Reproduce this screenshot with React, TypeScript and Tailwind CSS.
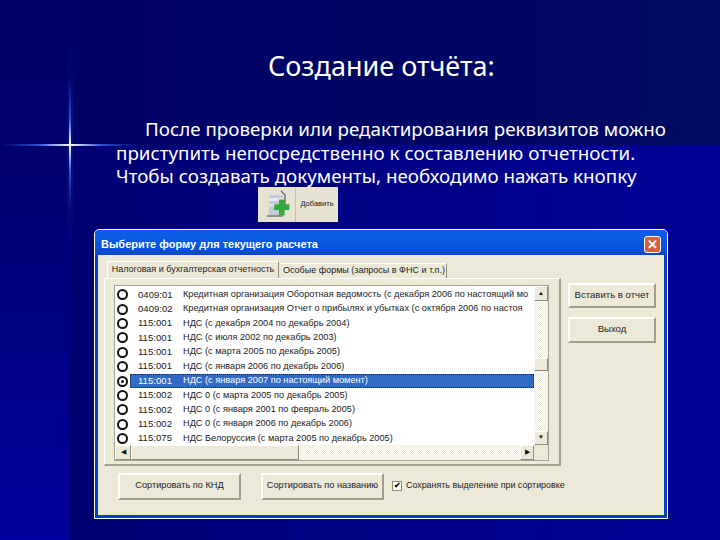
import { ReactNode } from "react";

const rows = [
  ["0409:01", "Кредитная организация Оборотная ведомость (с декабря 2006 по настоящий мо"],
  ["0409:02", "Кредитная организация Отчет о прибылях и убытках (с октября 2006 по настоя"],
  ["115:001", "НДС (с декабря 2004 по декабрь 2004)"],
  ["115:001", "НДС (с июля 2002 по декабрь 2003)"],
  ["115:001", "НДС (с марта 2005 по декабрь 2005)"],
  ["115:001", "НДС (с января 2006 по декабрь 2006)"],
  ["115:001", "НДС (с января 2007 по настоящий момент)"],
  ["115:002", "НДС 0 (с марта 2005 по декабрь 2005)"],
  ["115:002", "НДС 0 (с января 2001 по февраль 2005)"],
  ["115:002", "НДС 0 (с января 2006 по декабрь 2006)"],
  ["115:075", "НДС Белоруссия (с марта 2005 по декабрь 2005)"],
];

const Backdrop = () => (
  <svg className="absolute inset-0" width="720" height="540" viewBox="0 0 720 540">
    <defs>
      <linearGradient id="side" x1="0" y1="0" x2="0" y2="1">
        <stop offset="0" stopColor="#000068" />
        <stop offset="0.3" stopColor="#000070" />
        <stop offset="1" stopColor="#00009c" />
      </linearGradient>
      <linearGradient id="main" x1="0" y1="0" x2="1" y2="0">
        <stop offset="0" stopColor="#00006c" />
        <stop offset="0.45" stopColor="#000084" />
        <stop offset="1" stopColor="#000096" />
      </linearGradient>
      <linearGradient id="top" x1="0" y1="0" x2="1" y2="0">
        <stop offset="0" stopColor="#000068" />
        <stop offset="1" stopColor="#000a60" />
      </linearGradient>
      <linearGradient id="beamH" x1="0" y1="0" x2="1" y2="0">
        <stop offset="0" stopColor="#2040c0" stopOpacity="0" />
        <stop offset="0.28" stopColor="#2f55d0" />
        <stop offset="0.5" stopColor="#ffffff" />
        <stop offset="0.72" stopColor="#2f55d0" />
        <stop offset="1" stopColor="#2040c0" stopOpacity="0" />
      </linearGradient>
      <linearGradient id="beamV" x1="0" y1="0" x2="0" y2="1">
        <stop offset="0" stopColor="#2040c0" stopOpacity="0" />
        <stop offset="0.3" stopColor="#2f55d0" />
        <stop offset="0.5" stopColor="#ffffff" />
        <stop offset="0.7" stopColor="#2f55d0" />
        <stop offset="1" stopColor="#2040c0" stopOpacity="0" />
      </linearGradient>
      <linearGradient id="haze" x1="0" y1="0" x2="0" y2="1">
        <stop offset="0" stopColor="#1030b0" stopOpacity="0" />
        <stop offset="0.5" stopColor="#1030b0" stopOpacity="0.35" />
        <stop offset="1" stopColor="#1030b0" stopOpacity="0" />
      </linearGradient>
    </defs>
    <rect width="720" height="540" fill="url(#main)" />
    <rect width="720" height="145" fill="url(#top)" />
    <rect width="70" height="540" fill="url(#side)" />
    <rect x="67" y="35" width="6" height="225" fill="url(#haze)" />
    <rect x="0" y="144" width="140" height="2" fill="url(#beamH)" />
    <rect x="69" y="80" width="2" height="130" fill="url(#beamV)" />
  </svg>
);

const Radio = ({ on }: { on?: boolean }) => (
  <span className="w-[11px] h-[11px] rounded-full border-2 border-[#111] bg-white flex items-center justify-center shrink-0">
    {on && <span className="w-[3px] h-[3px] rounded-full bg-black" />}
  </span>
);

const Btn = ({ className, children }: { className: string; children: ReactNode }) => (
  <div
    className={`flex items-center justify-center whitespace-nowrap border-2 border-t-white border-l-white border-r-[#a09e8a] border-b-[#a09e8a] bg-[#ece9d8] text-[#222] ${className}`}
  >
    {children}
  </div>
);

const ArrowBtn = ({ className, children }: { className: string; children: ReactNode }) => (
  <div
    className={`flex items-center justify-center border border-t-white border-l-white border-r-[#8e8c78] border-b-[#8e8c78] bg-[#ece9d8] text-[#111] shrink-0 ${className}`}
  >
    {children}
  </div>
);

const Dither = ({ className }: { className: string }) => (
  <div
    className={`bg-[repeating-conic-gradient(#ece9d8_0_25%,#ffffff_0_50%)] bg-[length:2px_2px] ${className}`}
  />
);

const AddButton = () => (
  <div className="ml-[258px] -mt-[2px] w-[80px] h-[35px] flex bg-[#e6e3d2]">
    <div className="w-[38px] border-r border-[#c4c2b0] flex items-center justify-center">
      <svg width="32" height="30" viewBox="0 0 32 30">
        <path d="M8 6h14v20H8z" fill="#c6cad6" />
        <path d="M8 9h14v3H8zM8 15h14v2H8z" fill="#e8e8ee" />
        <path d="M20 2l4 4v14" fill="none" stroke="#6b7280" strokeWidth="1.5" />
        <path d="M6 27h16" stroke="#777" strokeWidth="1.5" />
        <path d="M21 11h6v5h5v6h-5v6h-6v-6h-5v-6h5z" fill="#35a83a" transform="translate(-2 0) scale(0.95)" />
      </svg>
    </div>
    <div className="flex-1 flex items-center justify-center font-['Liberation_Sans',sans-serif] text-[7.5px] text-[#222]">
      Добавить
    </div>
  </div>
);

const ListBox = () => (
  <div className="mt-[6px] ml-[9px] w-[435px] h-[176px] border border-[#a5a390] bg-white flex flex-col">
    <div className="flex flex-1 min-h-0">
      <div className="flex-1 min-w-0 pt-[2px] overflow-hidden">
        {rows.map(([code, name], i) => {
          const on = i === 6;
          return (
            <div key={i} className="h-[14.4px] flex items-center whitespace-nowrap">
              <div className="w-[15px] pl-[2px] flex justify-start shrink-0">
                <Radio on={on} />
              </div>
              <div
                className={`flex-1 flex h-full items-center pl-[8px] overflow-hidden ${on ? "bg-[#316ac5] text-white outline-1 outline-dotted outline-[#222] -outline-offset-1" : "text-[#222]"}`}
              >
                <span className="w-[45px] shrink-0 text-[9.6px]">{code}</span>
                <span className="text-[9.2px]">{name}</span>
              </div>
            </div>
          );
        })}
      </div>
      <div className="w-[14px] flex flex-col shrink-0">
        <ArrowBtn className="h-[15px] text-[6px]">▲</ArrowBtn>
        <Dither className="h-[57px]" />
        <ArrowBtn className="h-[13px]">{""}</ArrowBtn>
        <Dither className="flex-1" />
        <ArrowBtn className="h-[14px] text-[6px]">▼</ArrowBtn>
      </div>
    </div>
    <div className="h-[15px] flex shrink-0">
      <ArrowBtn className="w-[16px] text-[7px]">◀</ArrowBtn>
      <ArrowBtn className="w-[168px]">{""}</ArrowBtn>
      <Dither className="flex-1" />
      <ArrowBtn className="w-[14px] text-[7px]">▶</ArrowBtn>
      <div className="w-[14px] bg-[#ece9d8]" />
    </div>
  </div>
);

const Dialog = () => (
  <div className="ml-[94px] mt-[7px] w-[574px] h-[290px] border border-white bg-[#0a3ec0] p-[3px] pt-0 rounded-t-[5px] flex flex-col font-['Liberation_Sans',sans-serif]">
    <div className="h-[25px] shrink-0 -mx-[3px] px-[5px] pt-[5px] rounded-t-[4px] bg-gradient-to-b from-[#0a5de8] via-[#0a58e0] to-[#0848cc] flex items-center justify-between">
      <span className="text-white font-bold text-[11px] pl-[1px]">Выберите форму для текущего расчета</span>
      <span className="w-[17px] h-[17px] mr-[1px] rounded-[3px] border border-white bg-[#d9603a] text-white flex items-center justify-center text-[13px] font-bold leading-none">
        ✕
      </span>
    </div>
    <div className="flex-1 bg-[#ece9d8] flex flex-col min-h-0">
      <div className="flex pt-[6px] pl-[6px]">
        <div className="w-[457px] flex flex-col">
          <div className="flex pl-[3px] h-[17px] items-end whitespace-nowrap text-[9px] text-[#222]">
            <div className="w-[172px] h-[17px] border border-b-0 border-white border-r-[#8e8c78] bg-[#ece9d8] flex items-center justify-center">
              Налоговая и бухгалтерская отчетность
            </div>
            <div className="w-[167px] h-[15px] ml-[1px] border-t border-white border-r border-r-[#8e8c78] flex items-center pl-[3px]">
              Особые формы (запросы в ФНС и т.п.)
            </div>
          </div>
          <div className="h-[188px] border border-white border-r-[#a5a390] border-b-[#a5a390] border-r-2 border-b-2">
            <ListBox />
          </div>
        </div>
        <div className="ml-[7px] pt-[22px] flex flex-col gap-[9px] text-[9.6px]">
          <Btn className="w-[88px] h-[25px]">Вставить в отчет</Btn>
          <Btn className="w-[88px] h-[26px]">Выход</Btn>
        </div>
      </div>
      <div className="flex pl-[20px] pt-[7px] text-[9.2px]">
        <Btn className="w-[123px] h-[27px]">Сортировать по КНД</Btn>
        <Btn className="ml-[20px] w-[123px] h-[27px]">Сортировать по названию</Btn>
        <div className="ml-[8px] h-[27px] flex items-center gap-[4px] text-[8.9px] text-[#222] whitespace-nowrap">
          <span className="w-[10px] h-[10px] bg-white border border-[#8e8c78] text-[8px] leading-none flex items-center justify-center font-bold text-black">
            ✔
          </span>
          Сохранять выделение при сортировке
        </div>
      </div>
    </div>
  </div>
);

export default function App() {
  return (
    <div className="relative w-[720px] h-[540px] overflow-hidden bg-[#000080]">
      <Backdrop />
      <div className="relative flex flex-col font-['Noto_Sans',sans-serif] text-white">
        <h1 className="pt-[46px] pl-[268px] text-[27px] leading-[40px] font-normal whitespace-nowrap">
          Создание отчёта:
        </h1>
        <p className="mt-[32px] pl-[116px] w-[700px] text-[18.8px] leading-[23.5px] whitespace-nowrap">
          <span className="block pl-[29px]">После проверки или редактирования реквизитов можно</span>
          <span className="block">приступить непосредственно к составлению отчетности.</span>
          <span className="block">Чтобы создавать документы, необходимо нажать кнопку</span>
        </p>
        <AddButton />
        <Dialog />
      </div>
    </div>
  );
}
